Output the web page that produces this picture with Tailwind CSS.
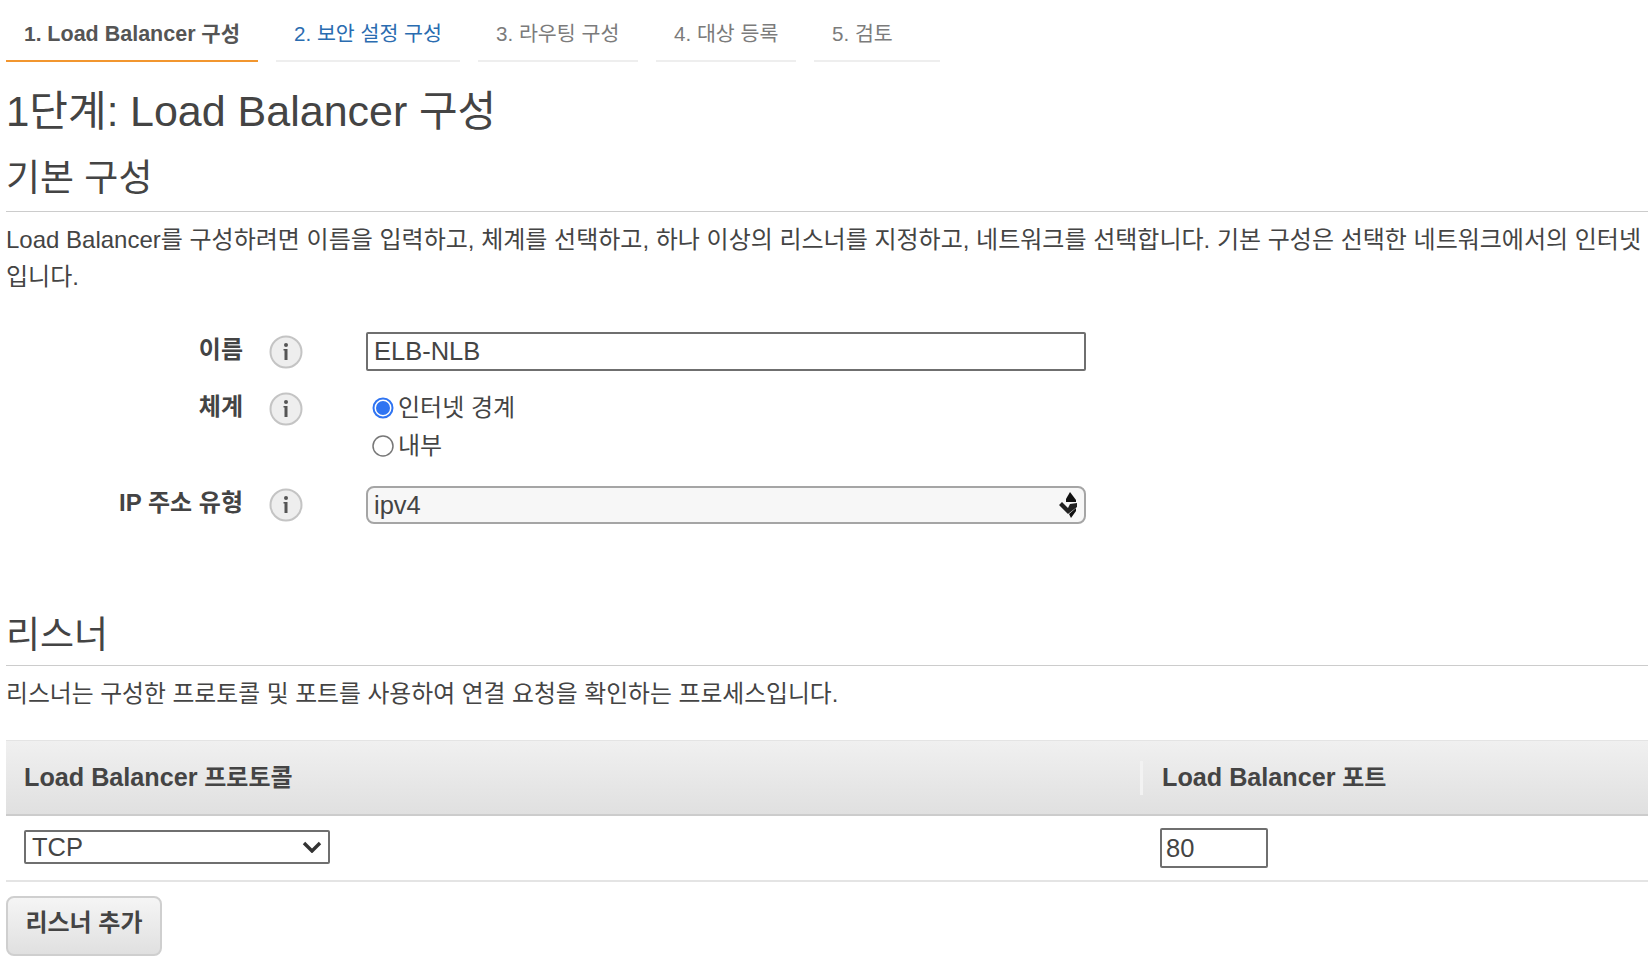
<!DOCTYPE html>
<html lang="ko">
<head>
<meta charset="utf-8">
<script src="https://cdn.jsdelivr.net/npm/@tailwindcss/browser@4"></script>
</head>
<body class="bg-white overflow-hidden">
<div class="w-[1648px] h-[976px] overflow-hidden pl-[6px] text-[#444] font-['Liberation_Sans','Noto_Sans_CJK_KR',sans-serif]">
  <div class="flex gap-[18px] pt-[14px] h-[62px] text-[20.6px] leading-[40px]">
    <div class="w-[252px] h-[48px] pl-[18px] border-b-2 border-[#f2962f] font-bold text-[#555] text-[21px] whitespace-nowrap">1. <span class="text-[21.5px]">Load Balancer</span> 구성</div>
    <div class="w-[184px] h-[48px] pl-[18px] border-b-2 border-[#eee] text-[#2a6cb0]">2. 보안 설정 구성</div>
    <div class="w-[160px] h-[48px] pl-[18px] border-b-2 border-[#eee] text-[#7b7b7b]">3. 라우팅 구성</div>
    <div class="w-[140px] h-[48px] pl-[18px] border-b-2 border-[#eee] text-[#7b7b7b]">4. 대상 등록</div>
    <div class="w-[126px] h-[48px] pl-[18px] border-b-2 border-[#eee] text-[#7b7b7b]">5. 검토</div>
  </div>
  <h1 class="h-[62px] text-[42px] leading-[62px] mt-[18px]">1단계: <span class="text-[43px]">Load Balancer</span> 구성</h1>
  <h2 class="h-[54px] text-[37px] leading-[54px] mt-[10px]">기본 구성</h2>
  <div class="border-t border-[#ccc] mt-[5px] pt-[9px] text-[24px] leading-[37px] whitespace-nowrap">Load Balancer를 구성하려면 이름을 입력하고, 체계를 선택하고, 하나 이상의 리스너를 지정하고, 네트워크를 선택합니다. 기본 구성은 선택한 네트워크에서의 인터넷<br>입니다.</div>

  <div class="grid grid-cols-[237px_123px_720px] mt-[37px]">
    <div class="h-[40px] flex items-center justify-end font-bold text-[24px] pb-[5px]">이름</div>
    <div class="flex items-center pl-[26px] pb-[1px]">
      <svg width="34" height="34" viewBox="0 0 34 34"><circle cx="17" cy="17" r="15.5" fill="#eee" stroke="#c4c4c4" stroke-width="2"/><circle cx="17" cy="10" r="2" fill="#555"/><path d="M14.5 14H18.5V25H15.5V15.5H14.5Z" fill="#555"/></svg>
    </div>
    <div class="w-[720px] h-[39px] border-2 border-[#6f6f6f] rounded-[2px] pl-[6px] text-[25.5px] leading-[35px]">ELB-NLB</div>

    <div class="h-[39px] mt-[17px] flex items-center justify-end font-bold text-[24px] pb-[4px]">체계</div>
    <div class="flex items-center h-[39px] pl-[26px] mt-[17px]">
      <svg width="34" height="34" viewBox="0 0 34 34"><circle cx="17" cy="17" r="15.5" fill="#eee" stroke="#c4c4c4" stroke-width="2"/><circle cx="17" cy="10" r="2" fill="#555"/><path d="M14.5 14H18.5V25H15.5V15.5H14.5Z" fill="#555"/></svg>
    </div>
    <div class="pl-[6px] mt-[17px] text-[24px]">
      <div class="flex items-center h-[38px] gap-[4px]">
        <svg width="22" height="22" viewBox="0 0 22 22"><circle cx="11" cy="11" r="9.5" fill="#fff" stroke="#2f74f2" stroke-width="2"/><circle cx="11" cy="11" r="7" fill="#2f74f2"/></svg>
        <span>인터넷 경계</span>
      </div>
      <div class="flex items-center h-[38px] gap-[4px]">
        <svg width="22" height="22" viewBox="0 0 22 22"><circle cx="11" cy="11" r="10" fill="#fff" stroke="#777" stroke-width="1.5"/></svg>
        <span>내부</span>
      </div>
    </div>

    <div class="h-[38px] mt-[21px] flex items-center justify-end font-bold text-[24px] pb-[4px]">IP 주소 유형</div>
    <div class="flex items-center pl-[26px] mt-[21px]">
      <svg width="34" height="34" viewBox="0 0 34 34"><circle cx="17" cy="17" r="15.5" fill="#eee" stroke="#c4c4c4" stroke-width="2"/><circle cx="17" cy="10" r="2" fill="#555"/><path d="M14.5 14H18.5V25H15.5V15.5H14.5Z" fill="#555"/></svg>
    </div>
    <div class="mt-[21px]">
      <div class="flex items-center justify-between w-[720px] h-[38px] border-2 border-[#a5a5a5] rounded-[8px] bg-[#f7f7f7] pl-[6px] pr-[6px] text-[25.5px]">
        <span>ipv4</span>
        <svg width="20" height="26" viewBox="0 0 20 26"><path d="M12 0 L18 8 L18 10 L8 10 L8 7 Z" fill="#111"/><path d="M1 13 L4 10 L10 16 L12 12 L19 11 L19 15 L10 22 Z" fill="#222"/><path d="M11 22 L18 16 L18 19 L13 26 Z" fill="#111"/></svg>
      </div>
    </div>
  </div>

  <h2 class="h-[54px] text-[37px] leading-[54px] mt-[85px]">리스너</h2>
  <div class="border-t border-[#ccc] mt-[2px] pt-[9px] text-[23.8px] leading-[37px] whitespace-nowrap">리스너는 구성한 프로토콜 및 포트를 사용하여 연결 요청을 확인하는 프로세스입니다.</div>

  <div class="mt-[28px] h-[76px] border-t border-[#e4e4e4] border-b-2 border-b-[#ccc] bg-gradient-to-b from-[#f0f0f0] to-[#e0e0e0] flex items-center font-bold text-[24px]">
    <div class="w-[1134px] pl-[18px]"><span class="text-[25.2px]">Load Balancer</span> 프로토콜</div>
    <div class="w-[3px] h-[34px] bg-[#f2f2f2]"></div>
    <div class="pl-[19px]"><span class="text-[25.2px]">Load Balancer</span> 포트</div>
  </div>
  <div class="h-[66px] border-b-2 border-[#e4e4e4] flex items-center text-[25.5px]">
    <div class="w-[1134px] pl-[18px] pb-[2px]">
      <div class="w-[306px] h-[34px] border-2 border-[#6f6f6f] rounded-[2px] pl-[6px] pr-[6px] flex items-center justify-between">
        <span>TCP</span>
        <svg width="20" height="12" viewBox="0 0 20 12"><path d="M2 2 L10 10 L18 2" fill="none" stroke="#333" stroke-width="3.4"/></svg>
      </div>
    </div>
    <div class="w-[3px]"></div>
    <div class="pl-[17px]">
      <div class="w-[108px] h-[40px] border-2 border-[#6f6f6f] rounded-[2px] pl-[4px] leading-[36px]">80</div>
    </div>
  </div>
  <button class="mt-[14px] block w-[156px] h-[60px] border-2 border-[#cfcfcf] rounded-[8px] bg-gradient-to-b from-[#f5f5f5] to-[#e0e0e0] font-bold text-[24px] text-[#444] pb-[6px]">리스너 추가</button>
</div>
</body>
</html>
